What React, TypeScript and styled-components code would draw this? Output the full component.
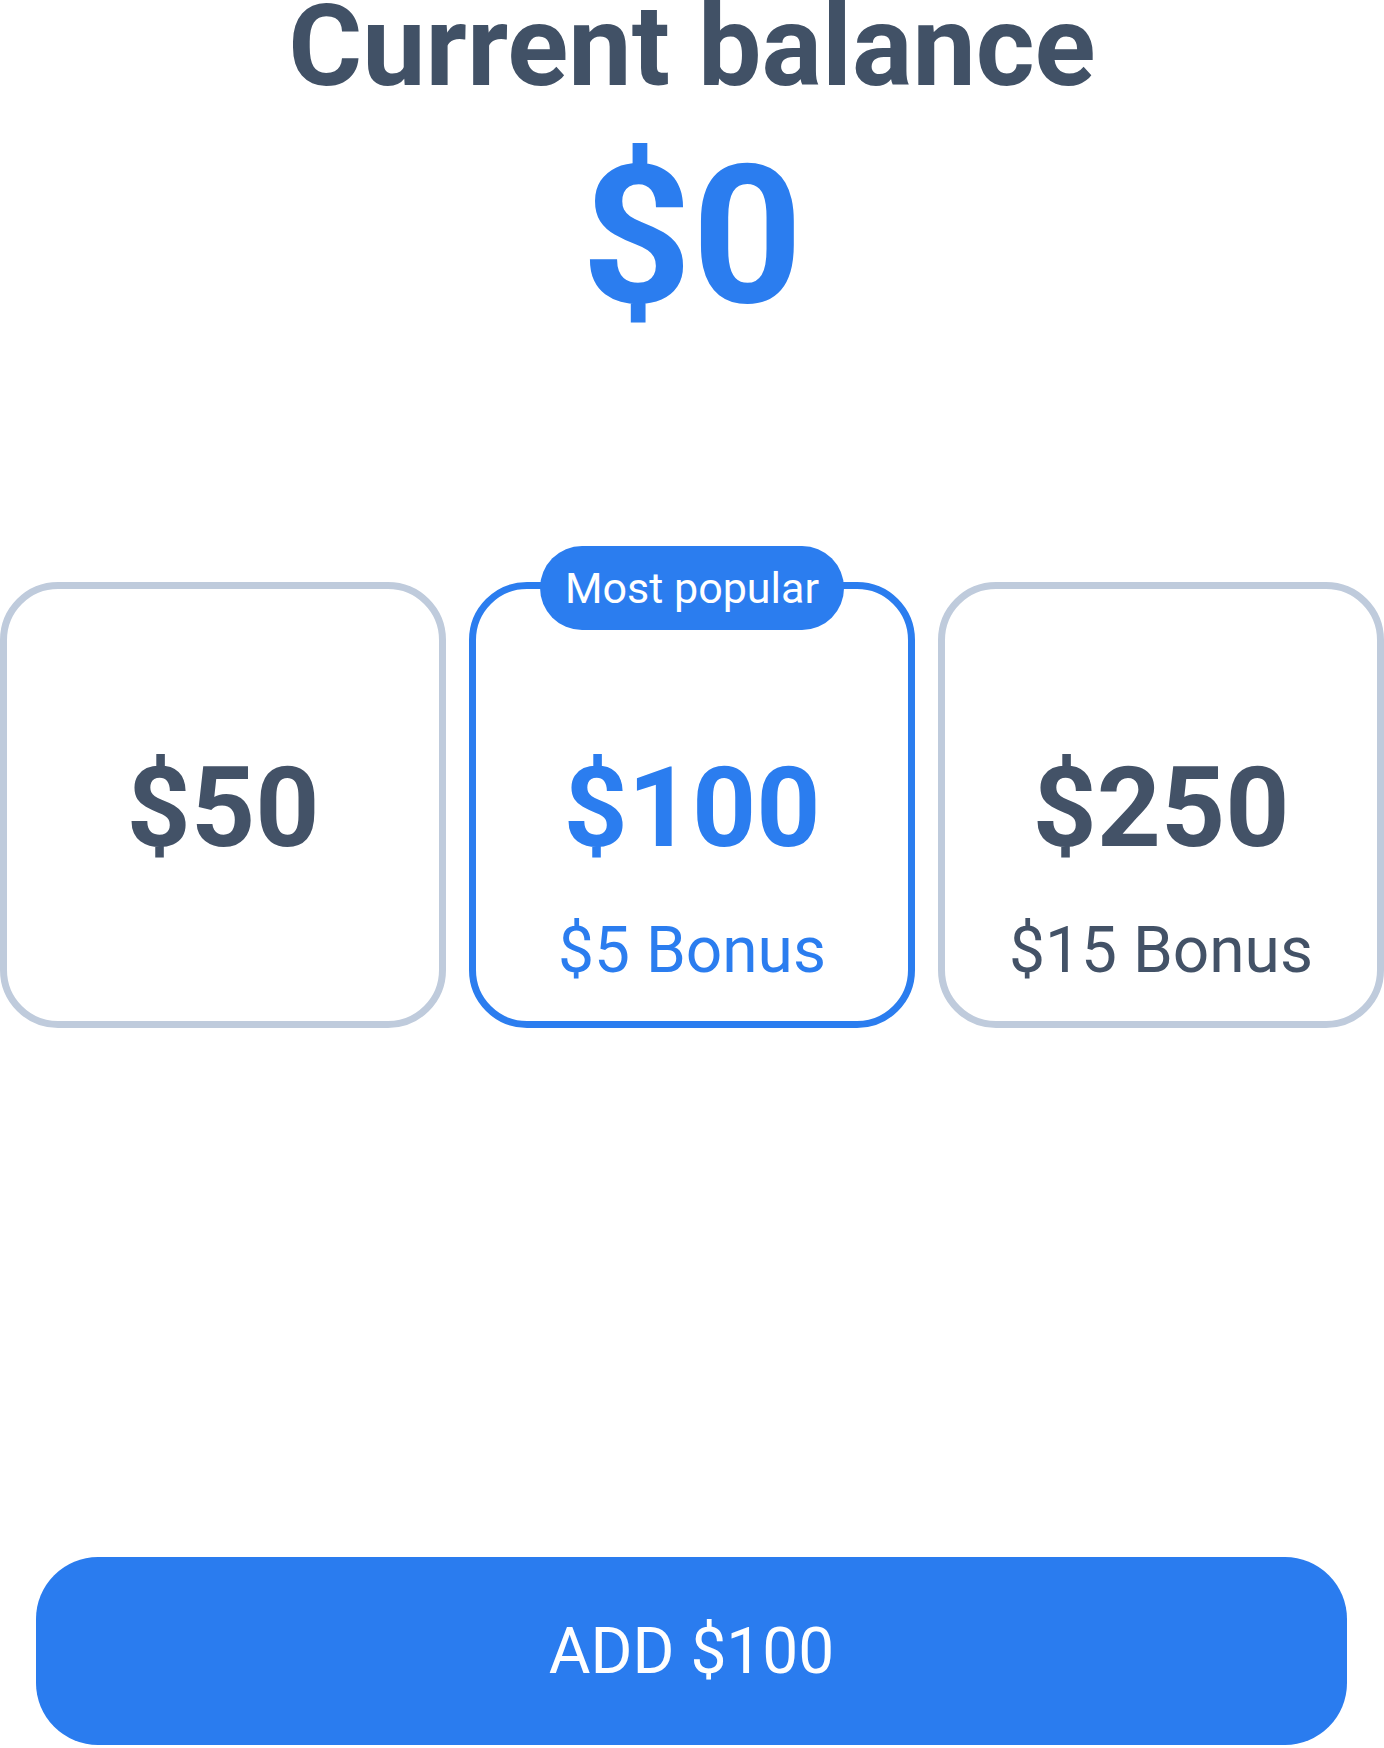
import React, { useState } from 'react';
import styled, { createGlobalStyle } from 'styled-components';

const GlobalStyle = createGlobalStyle`
  * {
    box-sizing: border-box;
  }
  body {
    margin: 0;
    background: #ffffff;
    font-family: Roboto, "Liberation Sans", sans-serif;
  }
`;

const packs = [
  { amount: 50, bonus: 0 },
  { amount: 100, bonus: 5, popular: true },
  { amount: 250, bonus: 15 },
];

const App = () => {
  const [selected, setSelected] = useState(100);
  return (
    <Wrapper>
      <GlobalStyle />
      <Header>Current balance</Header>
      <Balance>$0</Balance>
      <CardRow>
        {packs.map((p) => (
          <Card key={p.amount} $active={selected === p.amount} onClick={() => setSelected(p.amount)}>
            {p.popular && <Badge>Most popular</Badge>}
            <Amount $active={selected === p.amount}>${p.amount}</Amount>
            <Bonus $active={selected === p.amount}>{p.bonus ? `$${p.bonus} Bonus` : ''}</Bonus>
          </Card>
        ))}
      </CardRow>
      <Button>ADD ${selected}</Button>
    </Wrapper>
  );
};

export default App;

const Wrapper = styled.main`
  width: 1384px;
  height: 1748px;
  display: flex;
  flex-direction: column;
  overflow: hidden;
`;

const Header = styled.h1`
  font-size: 113px;
  font-weight: 700;
  line-height: 1;
  color: #415166;
  text-align: center;
  margin: -10px 0 0;
  padding: 0;
`;

const Balance = styled.div`
  font-size: 193px;
  font-weight: 700;
  line-height: 1;
  color: #2b7def;
  text-align: center;
  margin-top: 37px;
`;

const CardRow = styled.section`
  display: grid;
  grid-template-columns: repeat(3, 1fr);
  gap: 23px;
  margin-top: 249px;
`;

const Card = styled.div<{ $active: boolean }>`
  position: relative;
  aspect-ratio: 1;
  border: 7px solid ${(p) => (p.$active ? '#2b7def' : '#bfcbdc')};
  border-radius: 58px;
  background: #ffffff;
  padding-top: 6px;
  display: grid;
  grid-template-rows: 1fr auto 1fr;
  justify-items: center;
  cursor: pointer;
`;

const Badge = styled.div`
  position: absolute;
  top: -43px;
  left: 50%;
  transform: translateX(-50%);
  height: 84px;
  line-height: 84px;
  padding: 0 25px;
  border-radius: 42px;
  background: #2b7def;
  color: #ffffff;
  font-size: 43px;
  font-weight: 400;
  white-space: nowrap;
`;

const Amount = styled.div<{ $active: boolean }>`
  grid-row: 2;
  font-size: 112px;
  font-weight: 700;
  line-height: 1;
  color: ${(p) => (p.$active ? '#2b7def' : '#435267')};
`;

const Bonus = styled.div<{ $active: boolean }>`
  grid-row: 3;
  align-self: start;
  margin-top: 55px;
  font-size: 64px;
  font-weight: 400;
  line-height: 1;
  color: ${(p) => (p.$active ? '#2b7def' : '#435267')};
`;

const Button = styled.button`
  margin: 529px 37px 0 36px;
  height: 188px;
  border: none;
  border-radius: 62px;
  background: #2a7cef;
  color: #ffffff;
  font-family: Roboto, "Liberation Sans", sans-serif;
  font-size: 64px;
  font-weight: 400;
  display: flex;
  align-items: center;
  justify-content: center;
  cursor: pointer;
`;
